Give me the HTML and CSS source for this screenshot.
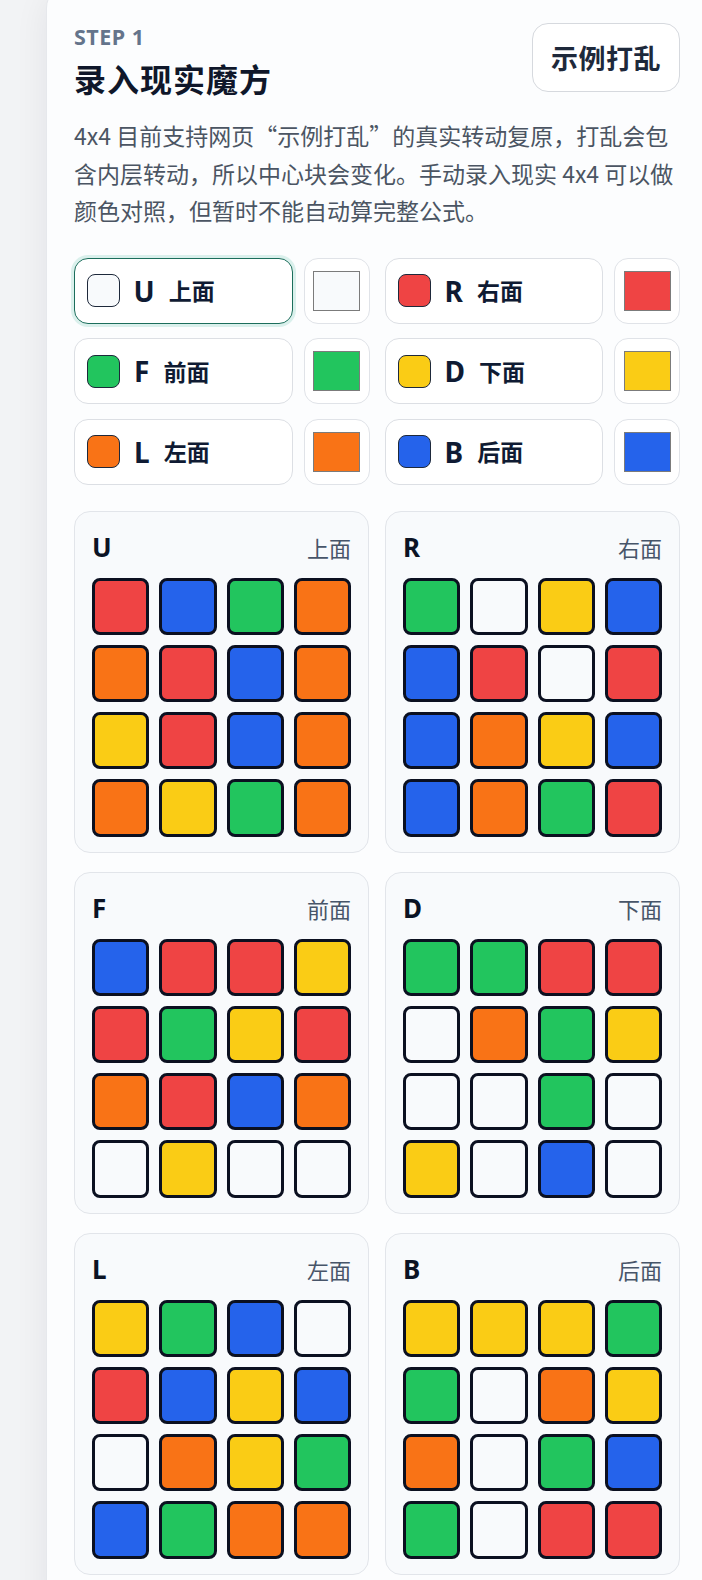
FILE: index.html
```html
<!DOCTYPE html>
<html lang="zh-CN">
<head>
<meta charset="utf-8">
<title>录入现实魔方</title>
<link rel="stylesheet" href="styles.css">
</head>
<body>
<section class="card">
  <header class="head">
    <div class="head-text">
      <div class="step">STEP 1</div>
      <h1 class="title">录入现实魔方</h1>
    </div>
    <button class="scramble" type="button">示例打乱</button>
  </header>
  <p class="desc">4x4 目前支持网页“示例打乱”的真实转动复原，打乱会包含内层转动，所以中心块会变化。手动录入现实 4x4 可以做颜色对照，但暂时不能自动算完整公式。</p>

  <div class="colors">
    <div class="pick-group">
      <button class="pick active" type="button"><span class="chip w"></span><span class="key">U</span><span class="name">上面</span></button>
      <div class="color-input"><span class="cv w"></span></div>
    </div>
    <div class="pick-group">
      <button class="pick" type="button"><span class="chip r"></span><span class="key">R</span><span class="name">右面</span></button>
      <div class="color-input"><span class="cv r"></span></div>
    </div>
    <div class="pick-group">
      <button class="pick" type="button"><span class="chip g"></span><span class="key">F</span><span class="name">前面</span></button>
      <div class="color-input"><span class="cv g"></span></div>
    </div>
    <div class="pick-group">
      <button class="pick" type="button"><span class="chip y"></span><span class="key">D</span><span class="name">下面</span></button>
      <div class="color-input"><span class="cv y"></span></div>
    </div>
    <div class="pick-group">
      <button class="pick" type="button"><span class="chip o"></span><span class="key">L</span><span class="name">左面</span></button>
      <div class="color-input"><span class="cv o"></span></div>
    </div>
    <div class="pick-group">
      <button class="pick" type="button"><span class="chip b"></span><span class="key">B</span><span class="name">后面</span></button>
      <div class="color-input"><span class="cv b"></span></div>
    </div>
  </div>

  <div class="faces">
    <div class="face">
      <div class="face-head"><span class="face-key">U</span><span class="face-name">上面</span></div>
      <div class="grid">
        <span class="s r"></span><span class="s b"></span><span class="s g"></span><span class="s o"></span>
        <span class="s o"></span><span class="s r"></span><span class="s b"></span><span class="s o"></span>
        <span class="s y"></span><span class="s r"></span><span class="s b"></span><span class="s o"></span>
        <span class="s o"></span><span class="s y"></span><span class="s g"></span><span class="s o"></span>
      </div>
    </div>
    <div class="face">
      <div class="face-head"><span class="face-key">R</span><span class="face-name">右面</span></div>
      <div class="grid">
        <span class="s g"></span><span class="s w"></span><span class="s y"></span><span class="s b"></span>
        <span class="s b"></span><span class="s r"></span><span class="s w"></span><span class="s r"></span>
        <span class="s b"></span><span class="s o"></span><span class="s y"></span><span class="s b"></span>
        <span class="s b"></span><span class="s o"></span><span class="s g"></span><span class="s r"></span>
      </div>
    </div>
    <div class="face">
      <div class="face-head"><span class="face-key">F</span><span class="face-name">前面</span></div>
      <div class="grid">
        <span class="s b"></span><span class="s r"></span><span class="s r"></span><span class="s y"></span>
        <span class="s r"></span><span class="s g"></span><span class="s y"></span><span class="s r"></span>
        <span class="s o"></span><span class="s r"></span><span class="s b"></span><span class="s o"></span>
        <span class="s w"></span><span class="s y"></span><span class="s w"></span><span class="s w"></span>
      </div>
    </div>
    <div class="face">
      <div class="face-head"><span class="face-key">D</span><span class="face-name">下面</span></div>
      <div class="grid">
        <span class="s g"></span><span class="s g"></span><span class="s r"></span><span class="s r"></span>
        <span class="s w"></span><span class="s o"></span><span class="s g"></span><span class="s y"></span>
        <span class="s w"></span><span class="s w"></span><span class="s g"></span><span class="s w"></span>
        <span class="s y"></span><span class="s w"></span><span class="s b"></span><span class="s w"></span>
      </div>
    </div>
    <div class="face">
      <div class="face-head"><span class="face-key">L</span><span class="face-name">左面</span></div>
      <div class="grid">
        <span class="s y"></span><span class="s g"></span><span class="s b"></span><span class="s w"></span>
        <span class="s r"></span><span class="s b"></span><span class="s y"></span><span class="s b"></span>
        <span class="s w"></span><span class="s o"></span><span class="s y"></span><span class="s g"></span>
        <span class="s b"></span><span class="s g"></span><span class="s o"></span><span class="s o"></span>
      </div>
    </div>
    <div class="face">
      <div class="face-head"><span class="face-key">B</span><span class="face-name">后面</span></div>
      <div class="grid">
        <span class="s y"></span><span class="s y"></span><span class="s y"></span><span class="s g"></span>
        <span class="s g"></span><span class="s w"></span><span class="s o"></span><span class="s y"></span>
        <span class="s o"></span><span class="s w"></span><span class="s g"></span><span class="s b"></span>
        <span class="s g"></span><span class="s w"></span><span class="s r"></span><span class="s r"></span>
      </div>
    </div>
  </div>
</section>
</body>
</html>
```

FILE: styles.css
```css
html, body {
  margin: 0;
  padding: 0;
  overflow: hidden;
}
body {
  background: #f2f3f5;
  font-family: "Noto Sans", "Noto Sans CJK SC", sans-serif;
  color: #0f172a;
}
.card {
  box-sizing: border-box;
  width: 662px;
  margin: -16px 0 0 46px;
  padding: 38px 27px 40px 27px;
  background: #fcfdfe;
  border: 1px solid #e6e8ec;
  border-radius: 24px;
  box-shadow: 0 10px 34px rgba(15, 23, 42, 0.07);
}
.head {
  display: flex;
  justify-content: space-between;
  align-items: flex-start;
  width: 606px;
}
.step {
  font-size: 21.5px;
  line-height: 28px;
  font-weight: 700;
  letter-spacing: 0.5px;
  color: #64748b;
}
.title {
  margin: 7px 0 0 0;
  font-family: "Noto Sans CJK SC", sans-serif;
  font-size: 32px;
  line-height: 40px;
  font-weight: 700;
  color: #0f172a;
  letter-spacing: 1px;
}
.scramble {
  box-sizing: border-box;
  width: 148px;
  height: 69px;
  padding: 0;
  background: #ffffff;
  border: 1px solid #d6d9de;
  border-radius: 16px;
  font-family: "Noto Sans CJK SC", sans-serif;
  font-size: 27px;
  font-weight: 700;
  color: #1e293b;
  letter-spacing: 0.5px;
}
.desc {
  width: 606px;
  margin: 19px 0 0 0;
  font-family: "Noto Sans CJK SC", "Noto Sans", sans-serif;
  font-size: 23px;
  line-height: 37.5px;
  color: #4b5563;
}
.colors {
  width: 606px;
  margin-top: 28px;
  display: grid;
  grid-template-columns: 1fr 1fr;
  column-gap: 15px;
  row-gap: 14.5px;
}
.pick-group {
  display: grid;
  grid-template-columns: 1fr 66px;
  column-gap: 11px;
}
.pick {
  box-sizing: border-box;
  height: 66px;
  display: flex;
  align-items: center;
  gap: 14px;
  padding: 0 0 0 12px;
  background: #ffffff;
  border: 1px solid #dcdfe4;
  border-radius: 14px;
  font-family: "Noto Sans", "Noto Sans CJK SC", sans-serif;
  color: #0f1b33;
}
.pick.active {
  border: 1.5px solid #1c6e5c;
  padding-left: 11.5px;
  box-shadow: 0 0 0 3px rgba(45, 175, 145, 0.16);
}
.chip {
  box-sizing: border-box;
  width: 33px;
  height: 33px;
  border: 1.5px solid #1e293b;
  border-radius: 8px;
}
.key {
  font-size: 28px;
  font-weight: 700;
  line-height: 1;
}
.name {
  font-family: "Noto Sans CJK SC", sans-serif;
  font-size: 23px;
  font-weight: 700;
  line-height: 1;
}
.color-input {
  box-sizing: border-box;
  height: 66px;
  display: flex;
  align-items: center;
  justify-content: center;
  background: #ffffff;
  border: 1px solid #e0e3e8;
  border-radius: 14px;
}
.cv {
  box-sizing: border-box;
  width: 47px;
  height: 40px;
  border: 1px solid #7b7b7b;
}
.faces {
  width: 606px;
  margin-top: 26px;
  display: grid;
  grid-template-columns: 1fr 1fr;
  gap: 19px 16px;
}
.face {
  box-sizing: border-box;
  padding: 17px 17px 15px 17px;
  background: #f8fafc;
  border: 1px solid #e2e5ea;
  border-radius: 16px;
}
.face-head {
  display: flex;
  justify-content: space-between;
  align-items: center;
  height: 36px;
  margin-bottom: 13px;
}
.face-key {
  font-size: 26px;
  line-height: 36px;
  font-weight: 700;
  color: #0b1324;
}
.face-name {
  font-family: "Noto Sans CJK SC", sans-serif;
  font-size: 22px;
  line-height: 36px;
  color: #475569;
}
.grid {
  display: grid;
  grid-template-columns: repeat(4, 1fr);
  gap: 10px;
}
.s {
  box-sizing: border-box;
  aspect-ratio: 1 / 1;
  border: 3px solid #0b1020;
  border-radius: 8px;
}
.r { background: #ef4444; }
.b { background: #2563eb; }
.g { background: #22c55e; }
.o { background: #f97316; }
.y { background: #facc15; }
.w { background: #f8fafc; }
```
